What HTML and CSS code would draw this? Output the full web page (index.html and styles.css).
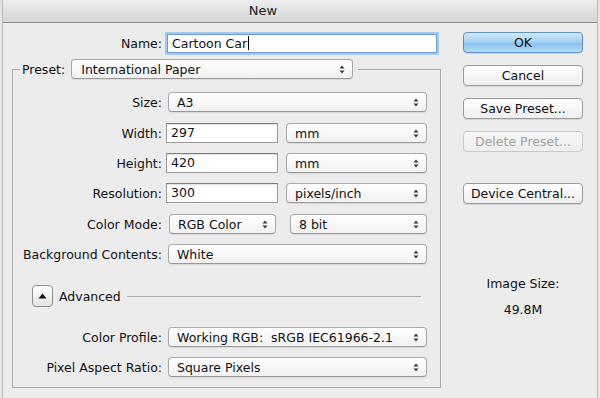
FILE: index.html
```html
<!DOCTYPE html>
<html lang="en">
  <head>
    <meta charset="UTF-8" />
    <title>New</title>
    <link rel="stylesheet" href="styles.css">
  </head>
  <body>
    <div class="window">
      <div class="titlebar">New</div>

      <div class="dialog">
        <!-- Left: name + preset group -->
        <div class="main">
          <div class="name-row">
            <span class="label name-label">Name:</span>
            <div class="field name-field">Cartoon Car<span class="caret"></span></div>
          </div>

          <fieldset class="preset-group">
            <legend>
              <span class="legend-label">Preset:</span>
              <div class="popup preset-popup">
                <span>International Paper</span>
                <svg class="arrows" width="6" height="9" viewBox="0 0 6 9"><path d="M0.5 3.5 L3 0.5 L5.5 3.5Z M0.5 5.5 L3 8.5 L5.5 5.5Z" /></svg>
              </div>
            </legend>

            <div class="row">
              <span class="label">Size:</span>
              <div class="popup wide">
                <span>A3</span>
                <svg class="arrows" width="6" height="9" viewBox="0 0 6 9"><path d="M0.5 3.5 L3 0.5 L5.5 3.5Z M0.5 5.5 L3 8.5 L5.5 5.5Z" /></svg>
              </div>
            </div>

            <div class="row spaced">
              <span class="label">Width:</span>
              <div class="field num">297</div>
              <div class="popup unit">
                <span>mm</span>
                <svg class="arrows" width="6" height="9" viewBox="0 0 6 9"><path d="M0.5 3.5 L3 0.5 L5.5 3.5Z M0.5 5.5 L3 8.5 L5.5 5.5Z" /></svg>
              </div>
            </div>

            <div class="row">
              <span class="label">Height:</span>
              <div class="field num">420</div>
              <div class="popup unit">
                <span>mm</span>
                <svg class="arrows" width="6" height="9" viewBox="0 0 6 9"><path d="M0.5 3.5 L3 0.5 L5.5 3.5Z M0.5 5.5 L3 8.5 L5.5 5.5Z" /></svg>
              </div>
            </div>

            <div class="row">
              <span class="label">Resolution:</span>
              <div class="field num">300</div>
              <div class="popup unit">
                <span>pixels/inch</span>
                <svg class="arrows" width="6" height="9" viewBox="0 0 6 9"><path d="M0.5 3.5 L3 0.5 L5.5 3.5Z M0.5 5.5 L3 8.5 L5.5 5.5Z" /></svg>
              </div>
            </div>

            <div class="row spaced">
              <span class="label">Color Mode:</span>
              <div class="popup mode">
                <span>RGB Color</span>
                <svg class="arrows" width="6" height="9" viewBox="0 0 6 9"><path d="M0.5 3.5 L3 0.5 L5.5 3.5Z M0.5 5.5 L3 8.5 L5.5 5.5Z" /></svg>
              </div>
              <div class="popup bits">
                <span>8 bit</span>
                <svg class="arrows" width="6" height="9" viewBox="0 0 6 9"><path d="M0.5 3.5 L3 0.5 L5.5 3.5Z M0.5 5.5 L3 8.5 L5.5 5.5Z" /></svg>
              </div>
            </div>

            <div class="row">
              <span class="label">Background Contents:</span>
              <div class="popup wide">
                <span>White</span>
                <svg class="arrows" width="6" height="9" viewBox="0 0 6 9"><path d="M0.5 3.5 L3 0.5 L5.5 3.5Z M0.5 5.5 L3 8.5 L5.5 5.5Z" /></svg>
              </div>
            </div>

            <div class="advanced">
              <div class="disclosure">
                <svg width="9" height="6" viewBox="0 0 9 6"><path d="M0.5 5.5 L4.5 0.5 L8.5 5.5Z" /></svg>
              </div>
              <span>Advanced</span>
              <div class="rule"></div>
            </div>

            <div class="row">
              <span class="label">Color Profile:</span>
              <div class="popup wide">
                <span>Working RGB:&nbsp; sRGB IEC61966-2.1</span>
                <svg class="arrows" width="6" height="9" viewBox="0 0 6 9"><path d="M0.5 3.5 L3 0.5 L5.5 3.5Z M0.5 5.5 L3 8.5 L5.5 5.5Z" /></svg>
              </div>
            </div>

            <div class="row">
              <span class="label">Pixel Aspect Ratio:</span>
              <div class="popup wide">
                <span>Square Pixels</span>
                <svg class="arrows" width="6" height="9" viewBox="0 0 6 9"><path d="M0.5 3.5 L3 0.5 L5.5 3.5Z M0.5 5.5 L3 8.5 L5.5 5.5Z" /></svg>
              </div>
            </div>
          </fieldset>
        </div>

        <!-- Right: buttons + image size -->
        <div class="side">
          <button class="btn default">OK</button>
          <button class="btn">Cancel</button>
          <button class="btn">Save Preset...</button>
          <button class="btn" disabled>Delete Preset...</button>
          <button class="btn device">Device Central...</button>

          <div class="image-size">
            <div>Image Size:</div>
            <div class="size-value">49.8M</div>
          </div>
        </div>
      </div>
    </div>
  </body>
</html>
```

FILE: styles.css
```css
body {
  margin: 0;
  background-color: #e4e4e4;
  font-family: "DejaVu Sans", "Liberation Sans", sans-serif;
  font-size: 12.5px;
  color: #111;
}
.window {
  margin: 0 2px;
  height: 398px;
  background-color: #ececec;
  border-left: 1px solid #b9b9b9;
  border-right: 1px solid #b9b9b9;
  box-sizing: border-box;
}
.titlebar {
  height: 22px;
  line-height: 22px;
  padding-right: 74px;
  text-align: center;
  font-size: 13px;
  color: #222;
  background: linear-gradient(#eeeeee, #d4d4d4);
  border-bottom: 1px solid #8c8c8c;
}
.dialog {
  display: flex;
  padding: 10px 0 0 9px;
}
.main {
  width: 429px;
}
.label {
  width: 149px;
  margin-right: 4px;
  text-align: right;
  white-space: nowrap;
}
.name-row {
  display: flex;
  align-items: center;
  height: 21px;
}
.name-label {
  width: 150px;
}
.field {
  box-sizing: border-box;
  height: 20px;
  line-height: 18px;
  padding-left: 4px;
  background-color: #fff;
  border: 1px solid #9a9a9a;
  border-top-color: #7d7d7d;
  box-shadow: inset 0 1px 1px rgba(0, 0, 0, 0.12);
  white-space: nowrap;
}
.name-field {
  width: 270px;
  height: 19px;
  line-height: 17px;
  margin-left: 1px;
  border-color: #6d9cd2;
  box-shadow: 0 0 0 2px #a5c8ee;
}
.caret {
  display: inline-block;
  width: 1px;
  height: 14px;
  margin-left: 1px;
  vertical-align: -2px;
  background-color: #000;
}
.num {
  width: 112px;
}
.popup {
  box-sizing: border-box;
  height: 20px;
  display: flex;
  align-items: center;
  justify-content: space-between;
  padding: 0 7px 0 8px;
  background: linear-gradient(#ffffff, #f1f1f1);
  border: 1px solid #a9a9a9;
  border-bottom-color: #999;
  border-radius: 4px;
  box-shadow: 0 1px 1px rgba(0, 0, 0, 0.08);
  white-space: nowrap;
}
.arrows path {
  fill: #3c3c3c;
}
.preset-group {
  margin: 5px 0 0;
  padding: 13px 12px 10px 0;
  border: 1px solid #ababab;
  display: flex;
  flex-direction: column;
  gap: 10px;
}
.preset-group legend {
  display: flex;
  align-items: center;
  margin-left: 7px;
  padding: 0 5px 0 2px;
}
.legend-label {
  margin-right: 6px;
}
.preset-popup {
  width: 282px;
  padding-left: 9px;
}
.row {
  display: flex;
  align-items: center;
  height: 20px;
}
.row.spaced {
  margin-top: 1px;
}
.row .popup {
  margin-left: 2px;
}
.popup.wide {
  width: 259px;
}
.popup.unit {
  margin-left: 8px;
  width: 141px;
}
.popup.mode {
  width: 107px;
  margin-left: 3px;
}
.popup.bits {
  margin-left: 14px;
  width: 137px;
}
.advanced {
  display: flex;
  align-items: center;
  height: 22px;
  margin: 11px 7px 10px 19px;
}
.disclosure {
  box-sizing: border-box;
  width: 21px;
  height: 22px;
  display: flex;
  align-items: center;
  justify-content: center;
  background: linear-gradient(#fdfdfd, #e4e4e4);
  border: 1px solid #8e8e8e;
  border-radius: 4px;
  margin-right: 6px;
}
.disclosure path {
  fill: #111;
}
.rule {
  flex: 1;
  height: 1px;
  margin-left: 6px;
  background-color: #a9a9a9;
}
.side {
  width: 120px;
  margin: -1px 0 0 22px;
  display: flex;
  flex-direction: column;
  gap: 12px;
}
.btn {
  height: 21px;
  padding: 0;
  font-family: inherit;
  font-size: 12.5px;
  color: #111;
  background: linear-gradient(#ffffff, #eeeeee);
  border: 1px solid #9c9c9c;
  border-radius: 4px;
  box-shadow: 0 1px 1px rgba(0, 0, 0, 0.1);
}
.btn.default {
  background: linear-gradient(#d4ebfb, #a0cff3 50%, #85c0ee 52%, #b4ddf9);
  border-color: #5f8fc4;
}
.btn:disabled {
  color: #a2a2a2;
  border-color: #c9c9c9;
  background: linear-gradient(#f7f7f7, #ededed);
  box-shadow: none;
}
.btn.device {
  margin-top: 19px;
}
.image-size {
  margin-top: 60px;
  text-align: center;
  line-height: 15px;
}
.size-value {
  margin-top: 11px;
}
```
